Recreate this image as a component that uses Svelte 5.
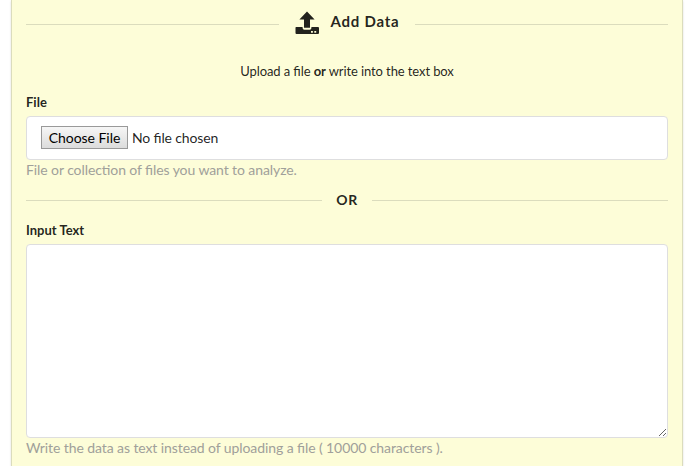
<script>
  let text = $state('');
</script>

<main class="segment">
  <h4 class="divider title">
    <span class="heading">
      <svg width="24" height="24" viewBox="0 0 24 24" aria-hidden="true">
        <path d="M12 0.4 L19.6 8.5 H15 V16.8 H9 V8.5 H4.4 Z" />
        <path fill-rule="evenodd" d="M1 16 H7.6 V17 Q7.6 18.7 9.3 18.7 H14.7 Q16.4 18.7 16.4 17 V16 H23 Q24 16 24 17 V22 Q24 23 23 23 H1.5 Q0.5 23 0.5 22 V17 Q0.5 16 1 16 Z M16 20 V21.7 H17.9 V20 Z M19.3 20 V21.7 H21.2 V20 Z" />
      </svg>
      <span class="name">Add Data</span>
    </span>
  </h4>

  <p class="intro">Upload a file <b>or</b> write into the text box</p>

  <div class="label">File</div>
  <div class="file">
    <button type="button">Choose File</button>
    <span>No file chosen</span>
  </div>
  <div class="hint">File or collection of files you want to analyze.</div>

  <div class="divider or"><span>OR</span></div>

  <label class="label" for="input-text">Input Text</label>
  <div class="area">
    <textarea id="input-text" bind:value={text}></textarea>
    <svg class="grip" width="9" height="9" viewBox="0 0 9 9" aria-hidden="true">
      <path d="M1 8 L8 1 M5 8 L8 5" />
    </svg>
  </div>
  <div class="hint">Write the data as text instead of uploading a file ( 10000 characters ).</div>
</main>

<style>
  :global(body) {
    background: #fff;
    overflow: hidden;
  }
  .segment {
    box-sizing: border-box;
    width: 672px;
    height: 466px;
    margin-left: 11px;
    padding: 0 14px;
    border: solid #dbdcbd;
    border-width: 0 1px;
    background: #fdfdd8;
    box-shadow: 0 1px 2px rgba(34, 36, 38, 0.15);
    color: rgba(0, 0, 0, 0.87);
    font-family: Lato, 'Liberation Sans', sans-serif;
    font-size: 14px;
    line-height: 20px;
    overflow: hidden;
    clip-path: inset(0 -5px);
  }
  .divider {
    display: flex;
    align-items: center;
    margin: 0;
    font-weight: 700;
  }
  .divider::before,
  .divider::after {
    content: '';
    flex: 1;
    height: 1px;
    background: #dbdcbd;
  }
  .title {
    height: 49px;
    font-size: 15px;
    letter-spacing: 0.75px;
  }
  .heading {
    display: flex;
    align-items: center;
    padding: 0 16px;
  }
  .heading svg {
    margin: -4px 12px 0 0;
    fill: #22221d;
  }
  .name {
    margin-top: -8px;
  }
  .intro {
    height: 20px;
    margin: 12px 0 0;
    text-align: center;
    font-size: 13px;
    letter-spacing: -0.1px;
    font-feature-settings: 'liga' 1;
  }
  .label {
    display: block;
    height: 20px;
    margin-top: 11px;
    font-size: 13px;
    font-weight: 700;
  }
  .file {
    box-sizing: border-box;
    display: flex;
    align-items: center;
    height: 44px;
    margin-top: 4px;
    padding: 0 14px 1px;
    gap: 4px;
    border: 1px solid #dededf;
    border-radius: 4px;
    background: #fff;
  }
  .file span {
    letter-spacing: -0.14px;
    font-feature-settings: 'liga' 1;
  }
  button {
    box-sizing: border-box;
    width: 87px;
    height: 23px;
    padding: 0;
    border: 1px solid #999;
    border-radius: 0;
    background: linear-gradient(#f6f6f6, #dcdcdc);
    color: #000;
    font: 14px/21px Lato, 'Liberation Sans', sans-serif;
    letter-spacing: -0.05px;
  }
  .hint {
    height: 20px;
    color: #a0a09a;
    letter-spacing: -0.09px;
    font-feature-settings: 'liga' 1;
  }
  .or {
    height: 20px;
    margin-top: 10px;
  }
  .or::before,
  .or::after {
    margin-top: 1px;
  }
  .or span {
    padding: 0 14px;
    letter-spacing: 0.7px;
  }
  .or + .label {
    margin-top: 10px;
  }
  .area {
    position: relative;
    height: 194px;
    margin-top: 4px;
  }
  textarea {
    display: block;
    box-sizing: border-box;
    width: 100%;
    height: 100%;
    margin: 0;
    padding: 11px 14px;
    border: 1px solid #dededf;
    border-radius: 4px;
    outline: 0;
    background: #fff;
    font: inherit;
    resize: none;
  }
  .grip {
    position: absolute;
    right: 1px;
    bottom: 1px;
    fill: none;
    stroke: #666;
  }
</style>
